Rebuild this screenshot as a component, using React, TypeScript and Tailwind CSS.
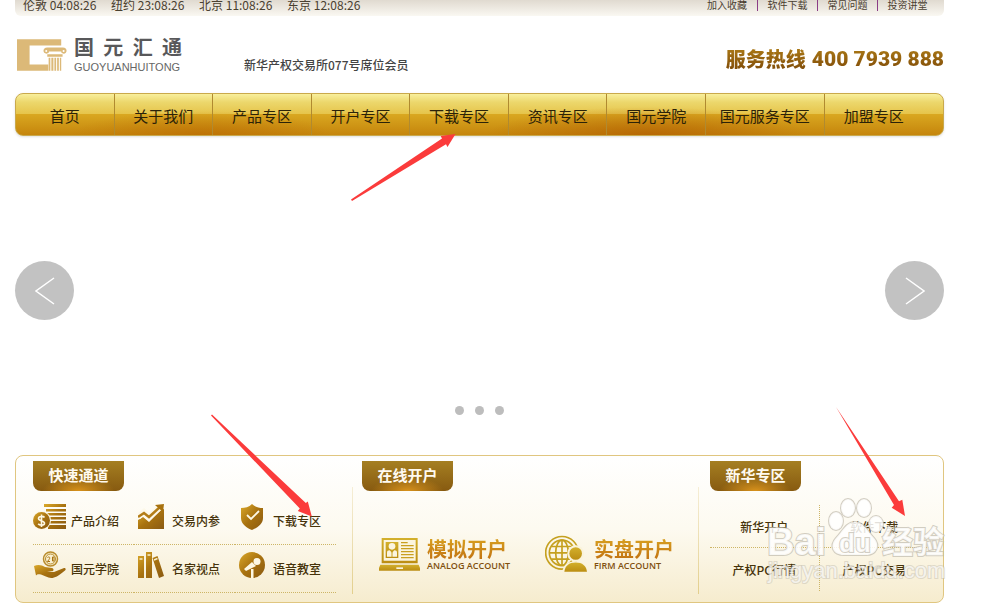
import type { ReactNode } from "react";

const clocks = [
  { city: "伦敦", time: "04:08:26" },
  { city: "纽约", time: "23:08:26" },
  { city: "北京", time: "11:08:26" },
  { city: "东京", time: "12:08:26" },
];

const topLinks = ["加入收藏", "软件下载", "常见问题", "投资讲堂"];

const navItems = [
  "首页",
  "关于我们",
  "产品专区",
  "开户专区",
  "下载专区",
  "资讯专区",
  "国元学院",
  "国元服务专区",
  "加盟专区",
];

function GoldDefs() {
  return (
    <svg className="absolute size-0" aria-hidden="true">
      <defs>
        <linearGradient id="gold" x1="0" y1="0" x2="1" y2="1">
          <stop offset="0" stopColor="#dba92a" />
          <stop offset="0.5" stopColor="#a8720f" />
          <stop offset="1" stopColor="#8a5a12" />
        </linearGradient>
        <linearGradient id="olive" x1="0" y1="0" x2="0" y2="1">
          <stop offset="0" stopColor="#d3b02c" />
          <stop offset="1" stopColor="#bb8d12" />
        </linearGradient>
      </defs>
    </svg>
  );
}

function LogoMark() {
  return (
    <svg viewBox="51 117 147 94" className="h-8 w-[50px]" fill="#dcb978" aria-hidden="true">
      <path d="M51 118h130v18H88v56h55v18H51z" />
      <path d="M140 142h46c14 0 14 18 2 18-5 0-7-3-7-6h-36c0 3-2 6-7 6-13 0-12-18 2-18z" />
      <path d="M140 162h45v7h-45zM144 172h5v38h-5zM152 172h6v38h-6zM161 172h5v38h-5zM169 172h5v38h-5zM177 172h4v38h-4z" />
      <circle cx="137" cy="152" r="3" fill="#fff" />
      <circle cx="188" cy="152" r="3" fill="#fff" />
    </svg>
  );
}

function CoinsIcon() {
  return (
    <svg viewBox="0 0 33 26" className="h-[26px] w-[33px]" aria-hidden="true">
      <path
        d="M11 0h22v3H11zM13 5h20v2.500H13zM14 9h19v2.500H14zM16 13h17v2.500H16zM17 17h16v2.500H17zM15 21h18v4H15z"
        fill="url(#gold)"
      />
      <circle cx="8.500" cy="16.500" r="9.500" fill="#fdf8e8" />
      <circle cx="8.500" cy="16.500" r="8.500" fill="url(#gold)" />
      <path
        d="M11.500 13.500c-1-1.500-6-1.700-6 1 0 3 6 1.800 6 4.700 0 2.500-5 2.600-6.300.6M8.500 10.500v12.500"
        fill="none"
        stroke="#fdf8e4"
        strokeWidth="1.600"
      />
    </svg>
  );
}

function ChartIcon() {
  return (
    <svg viewBox="0 0 26 26" className="size-[26px]" aria-hidden="true">
      <path d="M0 16l5-3 6 5L23 6l3-1v20H0z" fill="url(#gold)" />
      <path d="M0 13l6-5 5 5L22 3" fill="none" stroke="#fdf8e8" strokeWidth="6" />
      <path d="M0 13l6-4 5 4L22 3" fill="none" stroke="#b37d17" strokeWidth="2.500" />
      <path d="M17 1l9-1-1 8z" fill="#a8720f" />
    </svg>
  );
}

function ShieldIcon() {
  return (
    <svg viewBox="0 0 24 26" className="h-[26px] w-6" aria-hidden="true">
      <path d="M12 0c3 3 7 4 11 4v10c0 6-6 10-11 12C7 24 1 20 1 14V4c4 0 8-1 11-4z" fill="url(#gold)" />
      <path d="M7 11l4 4 8-8" fill="none" stroke="#fdf8e4" strokeWidth="1.800" />
    </svg>
  );
}

function HandIcon() {
  return (
    <svg viewBox="0 0 32 28" className="h-7 w-8" aria-hidden="true">
      <circle cx="16.500" cy="8" r="7" fill="#f8efcf" stroke="#b98c2c" strokeWidth="1.500" />
      <circle cx="16.500" cy="8" r="5" fill="none" stroke="#b98c2c" />
      <path d="M13.500 6.500c2-1.500 3 .5 1.500 2l-1.500 2h2.500M18.500 6v4h1.500V6z" fill="none" stroke="#a8720f" />
      <path
        d="M0 15c4-2 8-1 11 1l7 1c2 .5 2 3 0 3l-5 .5 7 .5 10-4c2 0 2 1.500 1 2.500-4 3-7 6-11 7-5 2-9-2-13-3-3-.5-4 0-5 1z"
        fill="url(#gold)"
      />
    </svg>
  );
}

function BooksIcon() {
  return (
    <svg viewBox="0 0 26 26" className="size-[26px]" aria-hidden="true">
      <path d="M0 4h6v22H0zM8 0h6v26H8zM14.500 6l5-2L26 24l-5 2z" fill="url(#gold)" />
      <path d="M1.500 7h3M9.500 3h3M16 8l3.500-1.500" stroke="#f8efcf" strokeWidth="1.500" />
    </svg>
  );
}

function MicIcon() {
  return (
    <svg viewBox="0 0 26 26" className="size-[26px]" aria-hidden="true">
      <circle cx="13" cy="13" r="13" fill="url(#gold)" />
      <circle cx="18" cy="9.500" r="3.500" fill="#fdf8e4" />
      <path d="M13 10l4 4-10 5-2-2zM12 17h2.500v9H12z" fill="#fdf8e4" />
    </svg>
  );
}

function LaptopIcon() {
  return (
    <svg viewBox="0 0 123 100" className="h-[34px] w-[41px]" aria-hidden="true">
      <path d="M8 2h108v76H8z" fill="url(#olive)" />
      <path d="M14 8h96v62H14z" fill="#fbf5df" />
      <path d="M20 14h38v48H20z" fill="url(#olive)" />
      <circle cx="39" cy="27" r="10" fill="#fbf5df" />
      <path d="M24 58V46q0-7 8-7l7 7 7-7q8 0 8 7v12z" fill="#fbf5df" />
      <path d="M39 42v18" stroke="#c9a020" strokeWidth="3" />
      <path
        d="M66 16h20M66 25h38M66 34h38M66 43h38M66 52h38M66 61h38"
        stroke="#c9a020"
        strokeWidth="4"
      />
      <path d="M4 82h115l4 10v8H0v-8z" fill="url(#olive)" />
      <path d="M52 90h20v5H52z" fill="#fbf5df" />
    </svg>
  );
}

function GlobeIcon() {
  return (
    <svg viewBox="0 0 126 110" className="h-[37px] w-[42px]" aria-hidden="true">
      <g fill="none" stroke="#c5a01f" strokeWidth="5">
        <circle cx="51" cy="53" r="49" />
        <circle cx="51" cy="53" r="38" />
        <ellipse cx="51" cy="53" rx="19" ry="38" />
        <path d="M51 15v76M13 53h76M19 34h64M19 72h64" />
      </g>
      <path d="M52 110c2-20 15-32 39-32s34 12 37 32z" fill="#faf3da" />
      <circle cx="92" cy="55" r="25" fill="#faf3da" />
      <circle cx="92" cy="55" r="19" fill="url(#olive)" />
      <path d="M58 110c2-18 14-28 34-28s32 10 34 28z" fill="url(#olive)" />
    </svg>
  );
}

const quickLinks = [
  { label: "产品介绍", icon: <CoinsIcon /> },
  { label: "交易内参", icon: <ChartIcon /> },
  { label: "下载专区", icon: <ShieldIcon /> },
  { label: "国元学院", icon: <HandIcon /> },
  { label: "名家视点", icon: <BooksIcon /> },
  { label: "语音教室", icon: <MicIcon /> },
];

function SectionTab({ children }: { children: ReactNode }) {
  return (
    <h2 className="flex h-[30px] w-[91px] items-center justify-center rounded-b-lg bg-[radial-gradient(ellipse_36px_14px_at_50%_100%,#d8921c,transparent),linear-gradient(#a57f22,#875a10)] pb-0.5 text-[15px] font-bold text-[#fffaf0]">
      {children}
    </h2>
  );
}

function TopBar() {
  return (
    <div className="flex h-4 justify-between rounded-b-md bg-linear-to-b from-[#e0dad0] to-[#faf8f2] pr-[7px] pl-2 text-[#4a4030]">
      <ul className="flex text-xs leading-[10px]">
        {clocks.map((clock) => (
          <li key={clock.city} className="w-[88px] whitespace-nowrap">
            {clock.city} {clock.time}
          </li>
        ))}
      </ul>
      <ul className="flex text-[10px] leading-[10px]">
        {topLinks.map((link, index) => (
          <li
            key={link}
            className={
              index > 0
                ? "h-[11px] w-[60px] border-l border-[#8b3d86] text-center"
                : "h-[11px] w-[60px] text-center"
            }
          >
            <a href="#" className="whitespace-nowrap">
              {link}
            </a>
          </li>
        ))}
      </ul>
    </div>
  );
}

function Header() {
  return (
    <header className="flex h-[77px] items-center">
      <a href="#" className="flex items-center gap-[7px] pl-0.5">
        <LogoMark />
        <span className="flex w-[108px] flex-col">
          <span className="flex justify-between text-xl leading-5 font-bold text-[#58585a]">
            <span>国</span>
            <span>元</span>
            <span>汇</span>
            <span>通</span>
          </span>
          <span className="pt-1 font-['Liberation_Sans',sans-serif] text-[11px] leading-3 text-[#666]">
            GUOYUANHUITONG
          </span>
        </span>
      </a>
      <p className="pt-5 pl-[62px] text-xs font-medium text-[#444]">
        新华产权交易所077号席位会员
      </p>
      <p className="ml-auto flex items-center gap-1.5 bg-linear-to-b from-[#bd8d1c] to-[#7e4a08] bg-clip-text pt-2 text-transparent">
        <span className="text-xl leading-6 font-black">服务热线</span>
        <span className="font-[Roboto,sans-serif] text-[21px] leading-6 font-black">400 7939 888</span>
      </p>
    </header>
  );
}

function MainNav() {
  return (
    <nav className="grid h-[43px] grid-cols-[repeat(7,99fr)_119fr_99fr_20fr] overflow-hidden rounded-lg border border-[#c9a94c] bg-[radial-gradient(ellipse_130px_24px_at_20%_100%,#b8650099,transparent),radial-gradient(ellipse_160px_28px_at_68%_100%,#b05a00b0,transparent),linear-gradient(#f8ef9c,#ecd76c_20%,#e6c44a_49%,#d9a720_50%,#c5850c)] shadow-sm">
      {navItems.map((item, index) => (
        <a
          key={item}
          href="#"
          className={
            index < navItems.length - 1
              ? "flex items-center justify-center border-r border-[#b08a30] pt-1 text-[15px] whitespace-nowrap text-[#2b2208]"
              : "flex items-center justify-center pt-1 text-[15px] whitespace-nowrap text-[#2b2208]"
          }
        >
          {item}
        </a>
      ))}
    </nav>
  );
}

function ArrowButton({ label, path }: { label: string; path: string }) {
  return (
    <button
      type="button"
      aria-label={label}
      className="flex size-[59px] items-center justify-center rounded-full bg-[#c2c2c2]"
    >
      <svg viewBox="0 0 20 28" className="h-7 w-5" fill="none" stroke="#fff" strokeWidth="1.500">
        <path d={path} />
      </svg>
    </button>
  );
}

function Carousel() {
  return (
    <section className="pt-[125px] pb-10">
      <div className="flex justify-between">
        <ArrowButton label="上一张" path="M19 1L1 14l18 13" />
        <ArrowButton label="下一张" path="M1 1l18 13L1 27" />
      </div>
      <div className="flex justify-center gap-[11px] pt-[86px]">
        {[1, 2, 3].map((slide) => (
          <button
            key={slide}
            type="button"
            aria-label={`第${slide}张`}
            className="size-[9px] rounded-full bg-[#bdbdbd]"
          />
        ))}
      </div>
    </section>
  );
}

type AccountLinkProps = {
  icon: ReactNode;
  title: string;
  subtitle: string;
};

function AccountLink({ icon, title, subtitle }: AccountLinkProps) {
  return (
    <a href="#" className="flex items-center gap-[7px]">
      {icon}
      <span className="flex w-[81px] flex-col">
        <span className="bg-linear-to-b from-[#d9a321] to-[#c06f10] bg-clip-text text-xl leading-6 font-bold text-transparent">
          {title}
        </span>
        <span className="font-['Open_Sans',sans-serif] text-[9px] leading-[10px] font-semibold whitespace-nowrap text-[#80500e]">
          {subtitle}
        </span>
      </span>
    </a>
  );
}

function Divider() {
  return (
    <div className="mt-[26px] mb-2 w-px shrink-0 bg-linear-to-b from-[#f6eed6] to-[#e3cf8c]" />
  );
}

function ServicePanel() {
  return (
    <section className="flex rounded-lg border border-[#e0c680] bg-linear-to-b from-white via-[#fdfaf0] to-[#f6ecce] pt-[5px]">
      <div className="w-[336px] pb-[9px] pl-[17px]">
        <SectionTab>快速通道</SectionTab>
        <div className="grid w-[303px] grid-cols-3 pt-1.5">
          {quickLinks.map((link) => (
            <a
              key={link.label}
              href="#"
              className="flex h-12 items-center gap-[5px] border-b border-dotted border-[#cdb566] text-xs font-medium whitespace-nowrap text-[#46330a]"
            >
              <span className="flex w-[33px] justify-center pb-[7px]">{link.icon}</span>
              {link.label}
            </a>
          ))}
        </div>
      </div>
      <Divider />
      <div className="flex-1 pl-[9px]">
        <SectionTab>在线开户</SectionTab>
        <div className="flex gap-[37px] pt-11 pl-[17px]">
          <AccountLink icon={<LaptopIcon />} title="模拟开户" subtitle="ANALOG ACCOUNT" />
          <AccountLink icon={<GlobeIcon />} title="实盘开户" subtitle="FIRM ACCOUNT" />
        </div>
      </div>
      <Divider />
      <div className="w-[244px] pr-3.5 pl-[11px]">
        <SectionTab>新华专区</SectionTab>
        <div className="grid grid-cols-2 pt-3.5 text-center text-xs font-medium whitespace-nowrap text-[#46330a]">
          <a href="#" className="h-[43px] border-r border-b border-dotted border-[#cdb566] leading-[44px]">
            新华开户
          </a>
          <a href="#" className="h-[43px] border-b border-dotted border-[#cdb566] leading-[44px]">
            软件下载
          </a>
          <a href="#" className="h-[43px] border-r border-dotted border-[#cdb566] leading-[44px]">
            产权PC行情
          </a>
          <a href="#" className="h-[43px] leading-[44px]">
            产权PC交易
          </a>
        </div>
      </div>
    </section>
  );
}

function Watermark() {
  return (
    <svg
      viewBox="0 0 184 90"
      className="pointer-events-none absolute top-[496px] left-[764px] h-[90px] w-[184px]"
      fill="#fff"
      fillOpacity="0.85"
      stroke="#c4bfb2"
      strokeOpacity="0.75"
      strokeWidth="2"
      paintOrder="stroke"
      aria-hidden="true"
    >
      <ellipse cx="72" cy="25" rx="7" ry="9" />
      <ellipse cx="84" cy="12" rx="7" ry="9" />
      <ellipse cx="100" cy="12" rx="7" ry="9" />
      <ellipse cx="112" cy="28" rx="7" ry="8" />
      <path d="M91 26c9 0 12 9 19 16 7 8 2 17-8 17H80c-11 0-15-9-8-17 7-7 10-16 19-16z" />
      <text x="3" y="59" fontFamily="'Liberation Sans', sans-serif" fontWeight="700" fontSize="38">
        Bai
      </text>
      <text x="75" y="56" fontFamily="'Liberation Sans', sans-serif" fontWeight="700" fontSize="26">
        du
      </text>
      <text x="118" y="57" fontFamily="'Noto Sans CJK SC', sans-serif" fontWeight="700" fontSize="31">
        经验
      </text>
      <text
        x="4"
        y="82"
        fontFamily="'Liberation Sans', sans-serif"
        fontSize="22"
        fillOpacity="0.7"
        strokeOpacity="0.5"
      >
        jingyan.baidu.com
      </text>
    </svg>
  );
}

function Pointers() {
  return (
    <svg
      viewBox="0 0 1000 606"
      className="pointer-events-none absolute top-0 left-0 h-[606px] w-[1000px]"
      fill="#fb3b3b"
      aria-hidden="true"
    >
      <path d="M351 199.500L442 138.500l-1.300-2.500L455.500 134l-8 13-1.500-2.700L352 201z" />
      <path d="M211 415.500l1-1 93.800 88.500 2-1.500 4 15-14-5.500 2-2.500z" />
      <path d="M836 407l63 94.300 3.300-1.600 2.700 16.300-13.300-8.300 2.300-2.700z" />
    </svg>
  );
}

export default function App() {
  return (
    <div className="relative overflow-hidden bg-white pr-14 pb-[3px] pl-[15px] font-['Noto_Sans_CJK_SC',sans-serif]">
      <GoldDefs />
      <TopBar />
      <Header />
      <MainNav />
      <Carousel />
      <ServicePanel />
      <Watermark />
      <Pointers />
    </div>
  );
}
